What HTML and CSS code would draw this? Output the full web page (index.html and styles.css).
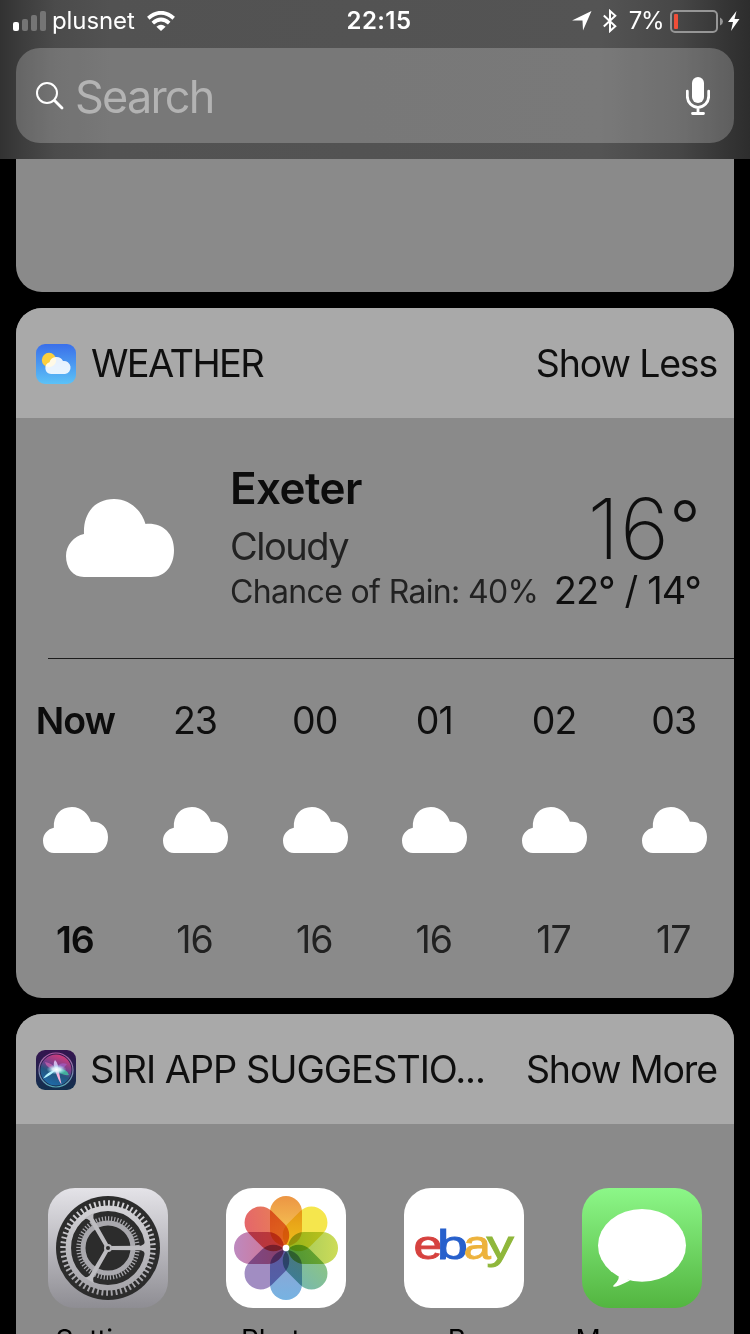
FILE: index.html
```
<!DOCTYPE html>
<html lang="en">
<head>
    <meta charset="utf-8">
    <title>Today View</title>
    <link rel="stylesheet" href="styles.css">
</head>
<body>
    <svg class="defs" width="0" height="0">
        <symbol id="cloud" viewBox="0 0 108 78" preserveAspectRatio="none">
            <path d="M18 78C7 78 0 69 0 57C0 46 8 37 18 35C17 14 29 0 48 0C64 0 76 12 79.500 25C96 23.500 108 34 108 51C108 67 99 78 85 78Z"/>
        </symbol>
    </svg>

    <div class="topbar">
        <div class="status">
            <div class="status-left">
                <svg class="signal" width="34" height="20" viewBox="0 0 34 20">
                    <rect x="0" y="11" width="6" height="9" rx="2" fill="#fff"/>
                    <rect x="9" y="8" width="6" height="12" rx="2" fill="#757575"/>
                    <rect x="18" y="4" width="6" height="16" rx="2" fill="#757575"/>
                    <rect x="27" y="0" width="6" height="20" rx="2" fill="#757575"/>
                </svg>
                <span class="carrier">plusnet</span>
                <svg width="28" height="20" viewBox="0 0 28 20" fill="none" stroke="#fff">
                    <path d="M1.300 7.200Q14-3.600 26.700 7.200" stroke-width="3.800"/>
                    <path d="M5.800 12.100Q14 4.900 22.200 12.100" stroke-width="3.800"/>
                    <path d="M9.400 15.700Q14 11.700 18.600 15.700L14 20Z" fill="#fff" stroke="none"/>
                </svg>
            </div>
            <span class="time">22:15</span>
            <div class="status-right">
                <svg width="20" height="20" viewBox="0 0 20 20"><path d="M0 9.500L19.500 0L11 19.500L10.500 9.500Z" fill="#fff"/></svg>
                <svg class="bluetooth" width="14" height="24" viewBox="0 0 14 24"><path d="M.8 6.500L12.300 17.200L7 22V2L12.300 6.800L.8 17.500" fill="none" stroke="#fff" stroke-width="2"/></svg>
                <span class="percent">7%</span>
                <svg class="battery" width="53" height="23" viewBox="0 0 53 23">
                    <rect x="1" y="1" width="46" height="21" rx="4" fill="none" stroke="#969696" stroke-width="2"/>
                    <path d="M50 7.500Q53 9 53 11.500Q53 14 50 15.500Z" fill="#969696"/>
                    <rect x="4" y="4" width="4" height="15" rx="1" fill="#f04e38"/>
                </svg>
                <svg width="12" height="20" viewBox="0 0 12 20"><path d="M8.500 0L0 11H5L3 20L11.500 8H6.500Z" fill="#fff"/></svg>
            </div>
        </div>
        <div class="search">
            <svg width="30" height="30" viewBox="0 0 30 30" fill="none" stroke="#fff" stroke-linecap="round">
                <circle cx="12" cy="12" r="10" stroke-width="2"/>
                <path d="M19.500 19.500L27 27" stroke-width="2.800"/>
            </svg>
            <span class="placeholder">Search</span>
            <svg class="mic" width="24" height="38" viewBox="0 0 24 38">
                <rect x="6" y="0" width="12" height="26" rx="6" fill="#fff"/>
                <path d="M1.300 14.200V19C1.300 25.500 6 30.300 12 30.300S22.700 25.500 22.700 19V14.200M12 30.300V36.500M6.500 36.500H17.500" fill="none" stroke="#fff" stroke-width="2.800" stroke-linecap="round"/>
            </svg>
        </div>
    </div>

    <div class="card card-cut"></div>

    <div class="card weather">
        <div class="card-header">
            <svg class="card-icon" width="40" height="40" viewBox="0 0 40 40">
                <defs>
                    <linearGradient id="sky" x1="0" y1="0" x2="0" y2="1"><stop offset="0" stop-color="#3a6fea"/><stop offset="1" stop-color="#5cc2f7"/></linearGradient>
                </defs>
                <rect width="40" height="40" rx="9" fill="url(#sky)"/>
                <circle cx="13" cy="16" r="7.200" fill="#fccf3e"/>
                <path d="M15 30A6 6 0 0 1 13.500 18.300A7.300 7.300 0 0 1 27 17A6.500 6.500 0 1 1 29 30Z" fill="#fff" fill-opacity=".87"/>
            </svg>
            <span class="card-title title-weather">WEATHER</span>
            <span class="card-action">Show Less</span>
        </div>
        <div class="current">
            <svg class="cloud cloud-big"><use href="#cloud"/></svg>
            <div class="place">
                <div class="city">Exeter</div>
                <div class="condition">Cloudy</div>
                <div class="rain">Chance of Rain: 40%</div>
            </div>
            <div class="temps">
                <div class="temp-now">16<span class="degree">°</span></div>
                <div class="temp-range">22° / 14°</div>
            </div>
        </div>
        <div class="hours">
            <div class="hour now"><span>Now</span><svg class="cloud"><use href="#cloud"/></svg><span class="deg">16</span></div>
            <div class="hour"><span>23</span><svg class="cloud"><use href="#cloud"/></svg><span class="deg">16</span></div>
            <div class="hour"><span>00</span><svg class="cloud"><use href="#cloud"/></svg><span class="deg">16</span></div>
            <div class="hour"><span>01</span><svg class="cloud"><use href="#cloud"/></svg><span class="deg">16</span></div>
            <div class="hour"><span>02</span><svg class="cloud"><use href="#cloud"/></svg><span class="deg">17</span></div>
            <div class="hour"><span>03</span><svg class="cloud"><use href="#cloud"/></svg><span class="deg">17</span></div>
        </div>
    </div>

    <div class="card siri">
        <div class="card-header">
            <svg class="card-icon" width="40" height="40" viewBox="0 0 40 40">
                <defs>
                    <linearGradient id="siriBg" x1="0" y1="0" x2="0" y2="1"><stop offset="0" stop-color="#35154f"/><stop offset="1" stop-color="#12304e"/></linearGradient>
                    <linearGradient id="orb" x1=".7" y1="0" x2=".3" y2="1"><stop offset="0" stop-color="#d83a78"/><stop offset=".4" stop-color="#74408f"/><stop offset=".6" stop-color="#23567f"/><stop offset="1" stop-color="#1e6cab"/></linearGradient>
                    <linearGradient id="ring" x1="0" y1="0" x2="0" y2="1"><stop offset="0" stop-color="#b45ba5"/><stop offset="1" stop-color="#55a9b5"/></linearGradient>
                    <radialGradient id="glow"><stop offset="0" stop-color="#fff"/><stop offset=".4" stop-color="#dff6ff" stop-opacity=".9"/><stop offset="1" stop-color="#8ae8ff" stop-opacity="0"/></radialGradient>
                </defs>
                <rect width="40" height="40" rx="9" fill="url(#siriBg)"/>
                <circle cx="20" cy="20" r="15.500" fill="url(#orb)"/>
                <circle cx="20" cy="20" r="17" fill="none" stroke="url(#ring)" stroke-width="1.200"/>
                <path d="M20 20Q10 18 9 12Q17 13 20 20Z" fill="#e26bb8" fill-opacity=".6"/>
                <path d="M20 20Q22 11 31 14Q27 20 20 20Z" fill="#a76be0" fill-opacity=".5"/>
                <path d="M20 18Q32 19 33 25Q26 26 20 20Z" fill="#3ec7a0" fill-opacity=".8"/>
                <path d="M21 19Q13 27 7 28.500Q11 22 21 19Z" fill="#b6f4ff"/>
                <path d="M19 20L22.500 20L25.500 34.500Q22.500 31 19 20Z" fill="#f7b3dc"/>
                <path d="M20 20Q16 14 19 10Q23 14 21.500 20Z" fill="#e3d4ff" fill-opacity=".8"/>
                <ellipse cx="20.500" cy="19.500" rx="10" ry="5" fill="url(#glow)"/>
            </svg>
            <span class="card-title title-siri">SIRI APP SUGGESTIO...</span>
            <span class="card-action action-more">Show More</span>
        </div>
        <div class="apps">
            <div class="app">
                <svg width="120" height="120" viewBox="0 0 120 120">
                    <defs>
                        <linearGradient id="metal" x1="0" y1="0" x2="0" y2="1"><stop offset="0" stop-color="#e4e3e8"/><stop offset="1" stop-color="#8e8d93"/></linearGradient>
                        <linearGradient id="gear" gradientUnits="userSpaceOnUse" x1="0" y1="-48" x2="0" y2="48"><stop offset="0" stop-color="#d6d5d9"/><stop offset="1" stop-color="#a3a2a7"/></linearGradient>
                    </defs>
                    <rect width="120" height="120" rx="27" fill="url(#metal)"/>
                    <g transform="translate(60 60)">
                        <circle r="52" fill="#2c2c2c"/>
                        <circle r="39.700" fill="none" stroke="url(#gear)" stroke-width="5.500"/>
                        <circle r="44.500" pathLength="120" fill="none" stroke="url(#gear)" stroke-width="6.500" stroke-dasharray=".8 1.200"/>
                        <circle r="25" fill="none" stroke="#a9a8ad" stroke-width="5"/>
                        <circle r="29.500" pathLength="120" fill="none" stroke="#a9a8ad" stroke-width="4.500" stroke-dasharray=".8 1.200"/>
                        <g fill="#bdbcc0">
                            <path id="spoke" d="M0-2L33-2.200Q36-3 37.500-6V6Q36 3 33 2.200L0 2Z"/>
                            <use href="#spoke" transform="rotate(120)"/>
                            <use href="#spoke" transform="rotate(240)"/>
                        </g>
                        <circle r="4" fill="#b9b8bc"/>
                        <circle r="2" fill="#2c2c2c"/>
                    </g>
                </svg>
                <span>Settings</span>
            </div>
            <div class="app">
                <svg width="120" height="120" viewBox="0 0 120 120">
                    <defs>
                        <linearGradient id="p1" x1="0" y1="0" x2="0" y2="1"><stop offset="0" stop-color="#ec9544"/><stop offset="1" stop-color="#f8d458"/></linearGradient>
                        <linearGradient id="p3" x1="0" y1="0" x2="0" y2="1"><stop offset="0" stop-color="#cddc58"/><stop offset="1" stop-color="#9bc65c"/></linearGradient>
                        <linearGradient id="p4" x1="0" y1="0" x2="1" y2="0"><stop offset="0" stop-color="#8bc486"/><stop offset="1" stop-color="#78b9ac"/></linearGradient>
                        <linearGradient id="p5" x1="0" y1="0" x2="0" y2="1"><stop offset="0" stop-color="#76b3e2"/><stop offset="1" stop-color="#94a0d0"/></linearGradient>
                        <linearGradient id="p7" x1="0" y1="0" x2="0" y2="1"><stop offset="0" stop-color="#bd89bf"/><stop offset="1" stop-color="#d7718a"/></linearGradient>
                        <linearGradient id="p8" x1="0" y1="0" x2="1" y2="1"><stop offset="0" stop-color="#e4626e"/><stop offset="1" stop-color="#e98650"/></linearGradient>
                    </defs>
                    <rect width="120" height="120" rx="27" fill="#fff"/>
                    <g class="petals" transform="translate(60 60)">
                        <rect x="-16" y="-52" width="32" height="50" rx="16" fill="url(#p1)"/>
                        <rect x="-16" y="-52" width="32" height="50" rx="16" fill="#f5e64d" transform="rotate(45)"/>
                        <rect x="-16" y="-52" width="32" height="50" rx="16" fill="url(#p3)" transform="rotate(90)"/>
                        <rect x="-16" y="-52" width="32" height="50" rx="16" fill="url(#p4)" transform="rotate(135)"/>
                        <rect x="-16" y="-52" width="32" height="50" rx="16" fill="url(#p5)" transform="rotate(180)"/>
                        <rect x="-16" y="-52" width="32" height="50" rx="16" fill="#a18dc2" transform="rotate(225)"/>
                        <rect x="-16" y="-52" width="32" height="50" rx="16" fill="url(#p7)" transform="rotate(270)"/>
                        <rect x="-16" y="-52" width="32" height="50" rx="16" fill="url(#p8)" transform="rotate(315)"/>
                    </g>
                    <circle cx="60" cy="60" r="3.300" fill="#fff"/>
                </svg>
                <span>Photos</span>
            </div>
            <div class="app">
                <svg class="ebay" width="120" height="120" viewBox="0 0 120 120">
                    <rect width="120" height="120" rx="27" fill="#fff"/>
                    <text x="9.500" y="71" textLength="28.500" lengthAdjust="spacingAndGlyphs" fill="#d6423f" stroke="#d6423f">e</text>
                    <text x="33" y="71" textLength="30.500" lengthAdjust="spacingAndGlyphs" fill="#2760cc" stroke="#2760cc">b</text>
                    <text x="59.500" y="71" textLength="27" lengthAdjust="spacingAndGlyphs" fill="#edb23c" stroke="#edb23c">a</text>
                    <text x="82.500" y="71" textLength="27" lengthAdjust="spacingAndGlyphs" fill="#8fb73b" stroke="#8fb73b">y</text>
                </svg>
                <span>eBay</span>
            </div>
            <div class="app">
                <svg width="120" height="120" viewBox="0 0 120 120">
                    <defs>
                        <linearGradient id="green" x1="0" y1="0" x2="0" y2="1"><stop offset="0" stop-color="#8cf788"/><stop offset="1" stop-color="#53b540"/></linearGradient>
                    </defs>
                    <rect width="120" height="120" rx="27" fill="url(#green)"/>
                    <ellipse cx="60" cy="57.400" rx="44" ry="36.400" fill="#fff"/>
                    <path d="M35 85Q40 90 31 98Q31 101 48 92.500Z" fill="#fff"/>
                </svg>
                <span>Messages</span>
            </div>
        </div>
    </div>
</body>
</html>
```
FILE: styles.css
```
body {
    margin: 0;
    height: 1334px;
    overflow: hidden;
    background-color: #000;
    color: #0f0f0f;
    font-family: Inter, "Liberation Sans", sans-serif;
}
svg {
    display: block;
    flex: none;
}
.defs {
    position: absolute;
}
.topbar {
    height: 159px;
    background: linear-gradient(90deg, #323232 0, #3d3d3d 22px, #4b4b4b 55px, #525252 110px, #545454 600px, #464646 680px, #353535 725px, #2d2d2d 750px);
}
.status {
    display: grid;
    grid-template-columns: 1fr auto 1fr;
    align-items: center;
    height: 48px;
    padding: 0 10px 8px 13px;
    box-sizing: border-box;
    color: #fff;
    font-size: 24px;
}
.status-left,
.status-right {
    display: flex;
    align-items: center;
}
.status-right {
    justify-content: flex-end;
}
.carrier {
    margin: 0 12px 0 5px;
    letter-spacing: -.1px;
    line-height: 42px;
}
.time {
    padding-left: 5px;
    font-weight: 600;
    letter-spacing: .4px;
    line-height: 42px;
}
.bluetooth {
    margin: 0 12px 0 11px;
}
.percent {
    letter-spacing: -1.5px;
    line-height: 42px;
}
.battery {
    margin: 0 5px 0 7px;
}
.search {
    display: flex;
    align-items: center;
    height: 95px;
    margin: 0 16px;
    padding: 0 24px 0 19px;
    box-sizing: border-box;
    border-radius: 24px;
    background-color: rgba(255, 255, 255, .22);
}
.placeholder {
    flex: 1;
    padding-top: 1px;
    margin-left: 10px;
    color: #b3b3b3;
    font-size: 45px;
    letter-spacing: -1.8px;
}
.card {
    margin: 0 16px 16px;
    border-radius: 26px;
    background-color: #8a8a8a;
    overflow: hidden;
}
.card-cut {
    height: 133px;
    border-radius: 0 0 26px 26px;
}
.weather {
    height: 690px;
}
.card-header {
    display: flex;
    align-items: center;
    height: 110px;
    padding: 2px 17px 0 20px;
    box-sizing: border-box;
    background-color: #a9a9a9;
    font-size: 38px;
    white-space: nowrap;
}
.card-title {
    flex: 1;
    margin: 0 0 3px 15px;
}
.title-weather {
    letter-spacing: -1.6px;
}
.title-siri {
    margin-left: 14px;
    letter-spacing: -1.050px;
}
.card-action {
    margin-bottom: 1px;
    font-size: 37.500px;
    letter-spacing: -1.2px;
}
.action-more {
    letter-spacing: -1.1px;
}
.current {
    display: flex;
    height: 241px;
    margin-left: 32px;
    border-bottom: 1px solid #1c1c1c;
    box-sizing: border-box;
}
.cloud {
    width: 65px;
    height: 46px;
    fill: #fff;
}
.cloud-big {
    width: 108px;
    height: 78px;
    margin: 81px 56px 0 18px;
}
.place {
    flex: 1;
    color: #222;
    white-space: nowrap;
}
.city {
    margin-top: 40px;
    color: #0c0c0c;
    font-size: 44px;
    font-weight: 600;
    letter-spacing: -.6px;
    line-height: 60px;
}
.condition {
    font-size: 38px;
    letter-spacing: -1.5px;
    line-height: 56px;
}
.rain {
    padding-top: 1px;
    font-size: 32px;
    letter-spacing: -.650px;
    line-height: 34px;
}
.temps {
    margin-right: 33px;
    text-align: right;
    white-space: nowrap;
}
.temp-now {
    margin-top: 66px;
    font-size: 84px;
    font-weight: 250;
    letter-spacing: .5px;
    line-height: 90px;
}
.degree {
    font-size: 68px;
    font-weight: 300;
    line-height: 1px;
    vertical-align: 9px;
}
.temp-range {
    font-size: 38px;
    letter-spacing: -.9px;
    line-height: 32px;
}
.hours {
    display: grid;
    grid-template-columns: repeat(6, 1fr);
    padding-top: 37px;
}
.hour {
    display: flex;
    flex-direction: column;
    align-items: center;
    font-size: 37.500px;
    letter-spacing: -1px;
    line-height: 49px;
}
.hour span {
    margin-right: 1px;
}
.hour .cloud {
    margin: 62px 0 62px;
}
.deg {
    color: #222;
}
.now,
.now .deg {
    color: #0c0c0c;
    font-weight: 600;
}
.hour .deg {
    margin-right: 2px;
}
.apps {
    display: flex;
    gap: 58px;
    padding: 64px 32px 0;
}
.app {
    display: flex;
    flex-direction: column;
    align-items: center;
    width: 120px;
    color: #000;
    font-size: 28px;
    letter-spacing: -.3px;
    line-height: 40px;
}
.app span {
    margin-top: 12px;
}
.petals {
    isolation: isolate;
}
.petals rect {
    mix-blend-mode: multiply;
}
.ebay text {
    font-family: "Liberation Sans", Arial, sans-serif;
    font-size: 41px;
    stroke-width: .9px;
}
```
